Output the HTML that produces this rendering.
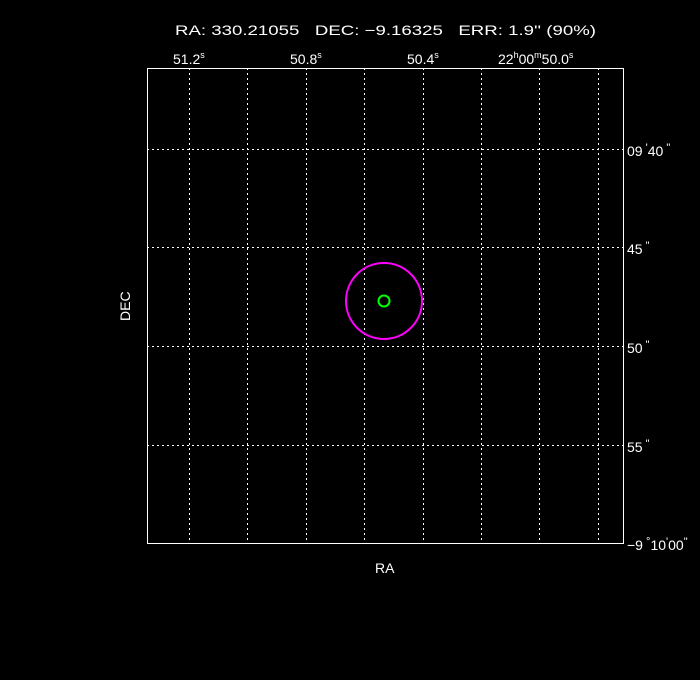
<!DOCTYPE html>
<html><head><style>
html,body{margin:0;padding:0;background:#000;}
svg{display:block}
text{font-family:"Liberation Sans",sans-serif;fill:#fff;font-size:14px;white-space:pre}
</style></head><body>
<svg width="700" height="680" viewBox="0 0 700 680" xmlns="http://www.w3.org/2000/svg">
<rect width="700" height="680" fill="#000"/>
<text x="175" y="35" font-size="16" textLength="421" lengthAdjust="spacingAndGlyphs" xml:space="preserve">RA: 330.21055   DEC: −9.16325   ERR: 1.9'' (90%)</text>
<g font-size="13">
<text x="173" y="64">51.2<tspan dy="-6" font-size="9">s</tspan></text>
<text x="290" y="64">50.8<tspan dy="-6" font-size="9">s</tspan></text>
<text x="407" y="64">50.4<tspan dy="-6" font-size="9">s</tspan></text>
<text x="498" y="64">22<tspan dy="-6" font-size="9">h</tspan><tspan dy="6">00</tspan><tspan dy="-6" font-size="9">m</tspan><tspan dy="6">50.0</tspan><tspan dy="-6" font-size="9">s</tspan></text>
<text x="627" y="156">09<tspan dy="-5" font-size="11"> '</tspan><tspan dy="5">40</tspan><tspan dy="-5" font-size="11"> "</tspan></text>
<text x="627" y="254">45<tspan dy="-5" font-size="11"> "</tspan></text>
<text x="627" y="353">50<tspan dy="-5" font-size="11"> "</tspan></text>
<text x="627" y="452">55<tspan dy="-5" font-size="11"> "</tspan></text>
<text x="627" y="550">−9<tspan dy="-5" font-size="11"> °</tspan><tspan dy="5">10</tspan><tspan dy="-5" font-size="11">'</tspan><tspan dy="5">00</tspan><tspan dy="-5" font-size="11">"</tspan></text>
</g>
<g stroke="#fff" stroke-width="1" stroke-dasharray="2,3" fill="none">
<path d="M189.5 68V543M247.5 68V543M306.5 68V543M364.5 68V543M423.5 68V543M481.5 68V543M539.5 68V543M598.5 68V543"/>
<path d="M147 149.5H623M147 247.5H623M147 346.5H623M147 445.5H623"/>
</g>
<rect x="147.5" y="68.5" width="476" height="475" fill="none" stroke="#fff" stroke-width="1"/>
<circle cx="384" cy="301" r="38" fill="none" stroke="#ff00ff" stroke-width="2"/>
<circle cx="384" cy="301" r="5.5" fill="none" stroke="#00ff00" stroke-width="2"/>
<text x="375" y="573" font-size="15">RA</text>
<text transform="translate(130,321) rotate(-90)" font-size="15">DEC</text>
</svg>
</body></html>
